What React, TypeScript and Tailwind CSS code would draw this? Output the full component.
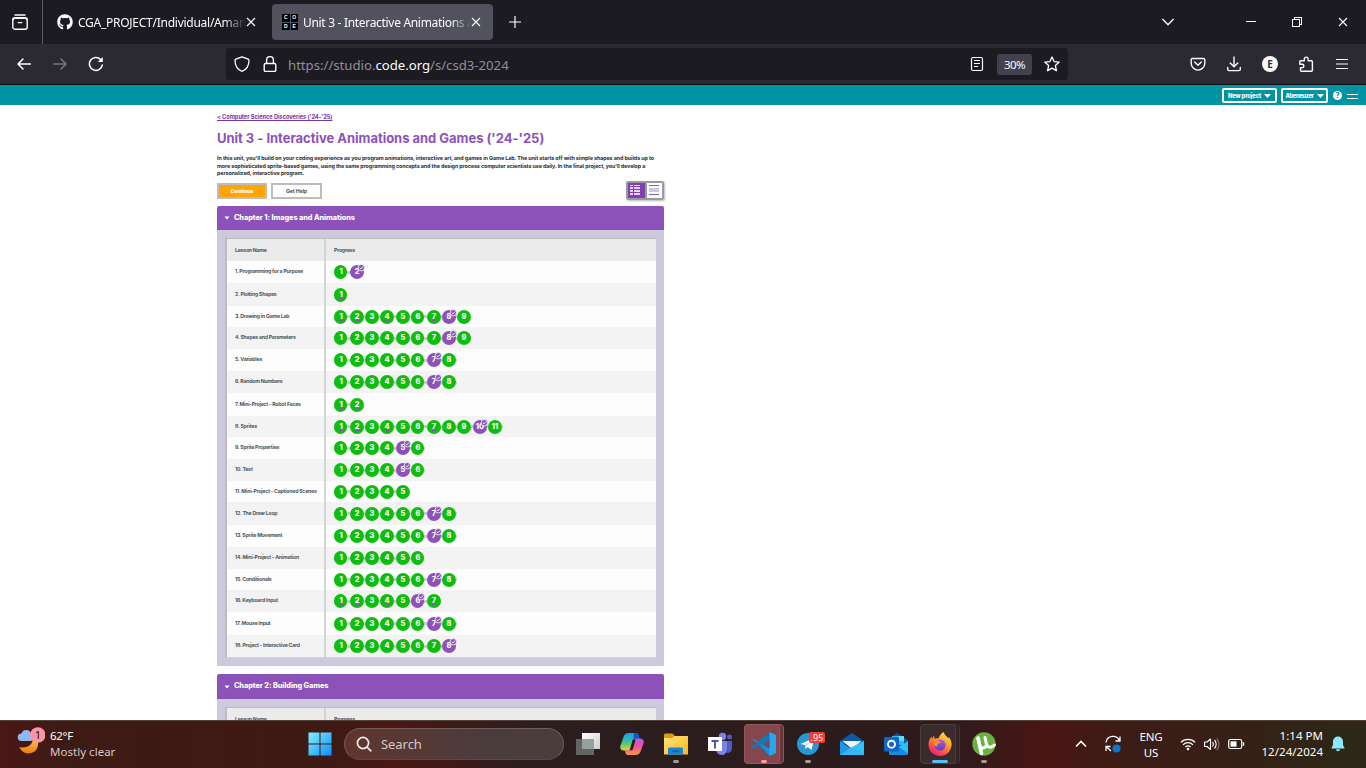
import React from "react";
import { FaGithub } from "react-icons/fa";

type Lesson = { name: string; count: number; choice?: number; h: string; tail?: boolean };

const lessons: Lesson[] = [
  { name: "1. Programming for a Purpose", count: 2, choice: 2, h: "h-[22px]" },
  { name: "2. Plotting Shapes", count: 1, h: "h-[23px]" },
  { name: "3. Drawing in Game Lab", count: 9, choice: 8, h: "h-[21px]" },
  { name: "4. Shapes and Parameters", count: 9, choice: 8, h: "h-[22px]" },
  { name: "5. Variables", count: 8, choice: 7, h: "h-[22px]", tail: true },
  { name: "6. Random Numbers", count: 8, choice: 7, h: "h-[22px]", tail: true },
  { name: "7. Mini-Project - Robot Faces", count: 2, h: "h-[23px]" },
  { name: "8. Sprites", count: 11, choice: 10, h: "h-[21px]", tail: true },
  { name: "9. Sprite Properties", count: 6, choice: 5, h: "h-[22px]", tail: true },
  { name: "10. Text", count: 6, choice: 5, h: "h-[22px]", tail: true },
  { name: "11. Mini-Project - Captioned Scenes", count: 5, h: "h-[21px]" },
  { name: "12. The Draw Loop", count: 8, choice: 7, h: "h-[23px]", tail: true },
  { name: "13. Sprite Movement", count: 8, choice: 7, h: "h-[22px]", tail: true },
  { name: "14. Mini-Project - Animation", count: 6, h: "h-[22px]" },
  { name: "15. Conditionals", count: 8, choice: 7, h: "h-[21px]", tail: true },
  { name: "16. Keyboard Input", count: 7, choice: 6, h: "h-[22px]" },
  { name: "17. Mouse Input", count: 8, choice: 7, h: "h-[23px]", tail: true },
  { name: "18. Project - Interactive Card", count: 8, choice: 8, h: "h-[22px]" },
];

const connectors = ["w-[3px]", "w-px", "w-px", "w-[2px]", "w-px", "w-[3px]", "w-px", "w-px", "w-[2px]", "w-px", "w-px"];

function Close({ className = "" }: { className?: string }) {
  return (
    <svg viewBox="0 0 10 10" className={`h-[10px] w-[10px] shrink-0 ${className}`} fill="none" stroke="#fbfbfe" strokeWidth="1.1">
      <path d="M1 1l8 8M9 1L1 9" />
    </svg>
  );
}

function TabStrip() {
  return (
    <div className="flex h-[44px] items-center bg-[#1c1b22] text-[12px] text-[#fbfbfe]">
      <div className="flex h-full w-[43px] shrink-0 items-center border-r border-[#5b5b66] pl-[12px]">
        <svg viewBox="0 0 16 16" className="h-4 w-4" fill="none" stroke="#fbfbfe" strokeWidth="1.4" strokeLinecap="round">
          <rect x=".8" y="4.4" width="14.4" height="10.8" rx="2" />
          <path d="M3 1h10M.8 6c0-1.300.7-2.300 2-2.300h10.400c1.300 0 2 1 2 2.300M6.200 8.600h3.600" />
        </svg>
      </div>
      <div className="ml-[14px] flex w-[200px] items-center">
        <FaGithub className="h-4 w-4 shrink-0" />
        <span className="mt-px ml-[5px] w-[167px] overflow-hidden whitespace-nowrap tracking-[-0.26px] [mask-image:linear-gradient(90deg,#000_145px,transparent_168px)]">
          CGA_PROJECT/Individual/Aman
        </span>
        <Close className="ml-[1px]" />
      </div>
      <div className="ml-[15px] flex h-[36px] w-[221px] items-center rounded-[4px] bg-[#52525e] pl-[10px]">
        <div className="grid h-4 w-4 shrink-0 grid-cols-2 gap-[1px] text-center font-['Liberation_Sans'] text-[5px] leading-[7.500px] font-bold text-white">
          <span className="bg-black">C</span>
          <span className="bg-black">O</span>
          <span className="bg-black">D</span>
          <span className="bg-black">E</span>
        </div>
        <span className="mt-[1px] ml-[5px] w-[168px] overflow-hidden whitespace-nowrap tracking-[-0.31px] [mask-image:linear-gradient(90deg,#000_148px,transparent_168px)]">
          Unit 3 - Interactive Animations a
        </span>
        <Close />
      </div>
      <svg viewBox="0 0 12 12" className="ml-[16px] h-3 w-3" stroke="#fbfbfe" strokeWidth="1.200">
        <path d="M6 0v12M0 6h12" />
      </svg>
      <svg viewBox="0 0 12 8" className="mt-[-1px] ml-auto h-2 w-3" fill="none" stroke="#fbfbfe" strokeWidth="1.4">
        <path d="M.500 1L6 6.800 11.500 1" />
      </svg>
      <svg viewBox="0 0 10 10" className="ml-[72px] h-[10px] w-[10px]" stroke="#fff" shapeRendering="crispEdges">
        <path d="M0 4.500h10" />
      </svg>
      <svg viewBox="0 0 10 10" className="ml-[36px] h-[10px] w-[10px]" fill="none" stroke="#fff" shapeRendering="crispEdges">
        <path d="M.500 2.500h7v7h-7zM2.500 2.500v-2h7v7h-2" />
      </svg>
      <Close className="mr-[18px] ml-[36px]" />
    </div>
  );
}

function NavBar() {
  return (
    <div className="flex h-[41px] items-center border-b border-[#0c0c0d] bg-[#2b2a33] text-[#fbfbfe]">
      <svg viewBox="0 0 14 12" className="ml-[17px] h-3 w-[14px]" fill="none" stroke="#fbfbfe" strokeWidth="1.500" strokeLinecap="round" strokeLinejoin="round">
        <path d="M13.500 6H1M6 1L1 6l5 5" />
      </svg>
      <svg viewBox="0 0 14 12" className="ml-[22px] h-3 w-[14px]" fill="none" stroke="#77767e" strokeWidth="1.500" strokeLinecap="round" strokeLinejoin="round">
        <path d="M.500 6H13M8 1l5 5-5 5" />
      </svg>
      <svg viewBox="0 0 16 16" className="ml-[21px] h-4 w-4" fill="none" stroke="#fbfbfe" strokeWidth="1.500" strokeLinecap="round">
        <path d="M14.300 9A6.500 6.500 0 1 1 12.600 3.400" />
        <path d="M14.800 1v5h-5z" fill="#fbfbfe" stroke="none" />
      </svg>
      <div className="ml-[122px] flex h-8 w-[842px] items-center rounded-[4px] bg-[#1c1b22]">
        <svg viewBox="0 0 16 16" className="ml-[8px] h-4 w-4" fill="none" stroke="#fbfbfe" strokeWidth="1.300" strokeLinejoin="round">
          <path d="M8 .8l6.200 2.400c.5.200.8.600.8 1.100 0 4.800-1.800 9-7 11-5.200-2-7-6.200-7-11 0-.5.300-.9.800-1.100z" />
        </svg>
        <svg viewBox="0 0 16 16" className="ml-[12px] h-4 w-4" fill="none" stroke="#fbfbfe" strokeWidth="1.400">
          <rect x="2.200" y="7.500" width="11.600" height="8" rx="1.500" />
          <path d="M4.600 7.500V4a3.400 3.400 0 0 1 6.800 0v3.500" />
        </svg>
        <span className="mt-[3px] ml-[10px] text-[13.200px] tracking-[-0.02px] text-[#8f8f98]">
          https://studio.<span className="text-[#fbfbfe]">code.org</span>/s/csd3-2024
        </span>
        <svg viewBox="0 0 14 16" className="ml-auto h-4 w-[14px]" fill="none" stroke="#fbfbfe" strokeWidth="1.200">
          <rect x="1.500" y="1.500" width="11" height="13" rx="1.500" />
          <path d="M4 4.500h6M4 7.500h6M4 10.500h4" />
        </svg>
        <span className="ml-[13px] flex h-[21px] w-[35px] items-center justify-center rounded-[3px] bg-[#42414d] pt-px text-[11.500px] tracking-[-0.5px]">30%</span>
        <svg viewBox="0 0 16 16" className="mr-[8px] ml-[12px] h-4 w-4" fill="none" stroke="#fbfbfe" strokeWidth="1.300" strokeLinejoin="round">
          <path d="M8 1l2.100 4.600 5 .6-3.700 3.400 1 5L8 12.100l-4.400 2.500 1-5L.9 6.200l5-.6z" />
        </svg>
      </div>
      <svg viewBox="0 0 16 16" className="ml-[122px] h-4 w-4" fill="none" stroke="#fbfbfe" strokeWidth="1.400" strokeLinecap="round" strokeLinejoin="round">
        <path d="M2.500 2.500h11c.8 0 1.300.5 1.300 1.300v3.500a6.800 6.800 0 0 1-13.600 0V3.800c0-.8.500-1.300 1.300-1.300zM4.700 6L8 9.200 11.300 6" />
      </svg>
      <svg viewBox="0 0 16 16" className="ml-[20px] h-4 w-4" fill="none" stroke="#fbfbfe" strokeWidth="1.400" strokeLinecap="round" strokeLinejoin="round">
        <path d="M8 1v9.500M4.200 7L8 10.700 11.800 7M1.700 11.500v1.800c0 .8.500 1.300 1.300 1.300h10c.8 0 1.300-.5 1.300-1.300v-1.800" />
      </svg>
      <span className="ml-[20px] flex h-4 w-4 items-center justify-center rounded-full bg-[#fbfbfe] text-[10px] leading-none font-bold text-[#2b2a33]">E</span>
      <svg viewBox="0 0 16 16" className="ml-[20px] h-4 w-4" fill="none" stroke="#fbfbfe" strokeWidth="1.400" strokeLinejoin="round">
        <path d="M2.500 4.700h3.800V3a1.900 1.900 0 0 1 3.800 0v1.700h3.300c.6 0 1 .4 1 1v8.600c0 .6-.4 1-1 1H3.500c-.6 0-1-.4-1-1v-2.600h1.700a1.700 1.700 0 0 0 0-3.400H1.800V5.500c0-.5.300-.8.700-.8z" />
      </svg>
      <svg viewBox="0 0 12 12" className="ml-[22px] h-3 w-3" stroke="#fbfbfe" strokeWidth="1.200">
        <path d="M0 1.500h12M0 6h12M0 10.500h12" />
      </svg>
    </div>
  );
}

function SiteHeader() {
  return (
    <div className="flex h-[20px] items-center justify-end bg-[#0093a4] pt-[1px] pr-[8px] font-['Inter'] text-[5.800px] leading-none font-extrabold text-white">
      <div className="flex h-[15px] w-[55px] items-center justify-center gap-[3px] rounded-[2px] border-2 border-white">
        <span className="tracking-[-0.12px]">New project</span>
        <svg viewBox="0 0 7 4" className="h-1 w-[7px]" fill="#fff"><path d="M0 0h7L3.500 4z" /></svg>
      </div>
      <div className="ml-[4px] flex h-[15px] w-[47px] items-center justify-center gap-[3px] rounded-[2px] border-2 border-white">
        <span className="tracking-[-0.4px]">Abeneuzer</span>
        <svg viewBox="0 0 7 4" className="h-1 w-[7px]" fill="#fff"><path d="M0 0h7L3.500 4z" /></svg>
      </div>
      <span className="ml-[5px] flex h-[9px] w-[9px] items-center justify-center rounded-full bg-white text-[7px] text-[#0093a4]">?</span>
      <span className="mt-[2px] ml-[5px] flex h-[5px] w-[11px] flex-col justify-between">
        <i className="h-px bg-white" />
        <i className="h-px bg-white" />
      </span>
    </div>
  );
}

function Bubble({ n, choice, last, tail }: { n: number; choice: boolean; last: boolean; tail?: boolean }) {
  const mark = !choice && [1, 2, 4, 7].includes(n);
  return (
    <>
      <span
        className={`relative flex h-[14px] shrink-0 items-center justify-center rounded-full text-[7.300px] leading-none font-extrabold text-white ${
          n === 1 || n === 6 ? "w-[13px] pl-px" : "w-[14px]"
        } ${choice ? "bg-[#8c52ba]" : "bg-[#0ebe0e]"}`}
      >
        {n}
        {mark && <i className="absolute bottom-[3px] left-[5px] h-px w-[4px] bg-[#8c52ba]" />}
        {choice && (
          <svg viewBox="0 0 8 8" className="absolute top-[-1px] right-[-1px] h-2 w-2">
            <circle cx="4.300" cy="3.700" r="3.200" fill="#8c52ba" stroke="#f3ecf8" strokeWidth=".9" />
            <path d="M2.800 3.700l1.100 1.200 2-2.300" fill="none" stroke="#fff" strokeWidth=".9" />
          </svg>
        )}
      </span>
      {(!last || tail) && <i className={`h-[3px] shrink-0 bg-[#c6cacd] ${last ? "w-px" : connectors[n - 1]}`} />}
    </>
  );
}

function TableHead() {
  return (
    <div className="flex h-[22px] bg-[#ebebeb]">
      <div className="flex w-[99px] items-center border-r-2 border-[#d5d5d5] pt-px pl-[8px]">Lesson Name</div>
      <div className="flex items-center pt-px pl-[8px]">Progress</div>
    </div>
  );
}

function ChapterHeader({ title, h }: { title: string; h: string }) {
  return (
    <div className={`flex ${h} items-center rounded-t-[2px] bg-[#8c52ba] pl-[7px] text-[7.300px] font-extrabold text-white`}>
      <svg viewBox="0 0 6 4" className="h-1 w-[6px]" fill="#fff"><path d="M.500.500h5L3 3.500z" /></svg>
      <span className="ml-[4px] tracking-[-0.06px]">{title}</span>
    </div>
  );
}

function Page() {
  return (
    <div className="h-[615px] overflow-hidden bg-white pl-[217px] font-['Inter']">
      <div className="w-[447px]">
        <div className="flex h-[24px] items-center text-[5.700px] font-bold tracking-[-0.05px] text-[#7536a8] underline">&lt; Computer Science Discoveries ('24-'25)</div>
        <h1 className="flex h-[19px] items-center text-[13px] font-bold tracking-[-0.02px] whitespace-nowrap text-[#8c52ba]">Unit 3 - Interactive Animations and Games ('24-'25)</h1>
        <div className="mt-[6px] pt-px text-[5.400px] leading-[7.300px] font-bold whitespace-nowrap text-[#292f36]">
          <p className="h-[8px] tracking-[-0.09px]">In this unit, you'll build on your coding experience as you program animations, interactive art, and games in Game Lab. The unit starts off with simple shapes and builds up to</p>
          <p className="h-[7px] tracking-[-0.105px]">more sophisticated sprite-based games, using the same programming concepts and the design process computer scientists use daily. In the final project, you'll develop a</p>
          <p className="h-[6px] tracking-[-0.105px]">personalized, interactive program.</p>
        </div>
        <div className="mt-[5px] flex h-[19px] items-center text-[5.300px] font-extrabold tracking-[-0.15px]">
          <div className="mt-[1px] flex h-[16px] w-[50px] items-center justify-center border-2 border-[#bdbdbd] bg-[#ffa400] pt-px text-white">Continue</div>
          <div className="mt-[1px] ml-[4px] flex h-[16px] w-[51px] items-center justify-center border-2 border-[#bdbdbd] bg-white pt-px font-bold text-[#4d575f]">Get Help</div>
          <div className="ml-auto flex h-[19px] w-[38px] rounded-[2px] border-2 border-[#949ca2] shadow-[1px_1px_2px_#bbb]">
            <svg viewBox="0 0 17 15" className="h-[15px] w-[17px] bg-[#8040ae]" fill="#e3d7ee">
              <path d="M2 2h3v1H2zM6 2h6v1H6zM2 4h3v2H2zM6 4h6v2H6zM2 7h3v2H2zM6 7h6v2H6zM2 10h3v2H2zM6 10h6v2H6z" />
            </svg>
            <svg viewBox="0 0 15 15" className="h-[15px] w-[17px] border-l-2 border-[#949ca2] bg-white" shapeRendering="crispEdges">
              <path d="M2 2h10v1H2zM2 11h10v1H2z" fill="#8060a8" />
              <path d="M2 5h10v4H2z" fill="#cfc4e2" />
            </svg>
          </div>
        </div>
        <div className="mt-[6px]">
          <ChapterHeader title="Chapter 1: Images and Animations" h="h-[24px]" />
        </div>
        <div className="h-[436px] bg-[#cfc9de] px-[8px] pt-[8px] text-[5.200px] font-bold tracking-[-0.23px] whitespace-nowrap text-[#4d575f]">
          <div className="border-t border-b border-l-2 border-t-[#bdbdbd] border-b-[#d5d5d5] border-l-[#bdbdbd]">
            <TableHead />
            {lessons.map((l, i) => (
              <div key={l.name} className={`flex ${l.h} ${i % 2 ? "bg-[#f3f3f3]" : "bg-[#fdfdfd]"}`}>
                <div className="flex w-[99px] shrink-0 items-center border-r-2 border-[#d5d5d5] pl-[8px]">{l.name}</div>
                <div className="flex items-center pl-[8px] tracking-normal">
                  {Array.from({ length: l.count }, (_, k) => (
                    <Bubble key={k} n={k + 1} choice={l.choice === k + 1} last={k + 1 === l.count} tail={l.tail} />
                  ))}
                </div>
              </div>
            ))}
          </div>
        </div>
        <div className="mt-[8px]">
          <ChapterHeader title="Chapter 2: Building Games" h="h-[25px]" />
        </div>
        <div className="bg-[#cfc9de] px-[8px] pt-[8px] text-[5.200px] font-bold tracking-[-0.23px] text-[#4d575f]">
          <div className="border-t border-l-2 border-[#bdbdbd]">
            <TableHead />
          </div>
        </div>
      </div>
    </div>
  );
}

function Slot({ children, dot }: { children: React.ReactNode; dot?: string }) {
  return (
    <div className="relative flex h-full w-[44px] shrink-0 items-center justify-center">
      {children}
      {dot && <i className={`absolute bottom-[4px] h-[3px] rounded-full ${dot}`} />}
    </div>
  );
}

function Taskbar() {
  return (
    <div className="relative z-10 flex h-[48px] items-center border-t border-[#55413a] bg-[linear-gradient(90deg,#4a1715_0px,#3d1b15_70px,#401914_240px,#3d1a15_330px,#4b1714_390px,#2b1e1e_530px,#2b1c1d_800px,#301a1b_960px,#4a1614_1045px,#3b1d16_1130px,#371f16_1220px,#2c2818_1366px)] pb-[1px] text-[12px] text-white">
      <svg viewBox="0 0 28 28" className="mb-[6px] ml-[17px] h-7 w-7 shrink-0">
        <defs>
          <linearGradient id="moon" x1="0" y1="0" x2="0" y2="1"><stop stopColor="#ffc94d" /><stop offset="1" stopColor="#ea7a16" /></linearGradient>
        </defs>
        <path d="M20 11c3 7 0 15.500-8.500 15.500-4 0-7.500-2.500-9-6.500C10 22 16 18 16 11z" fill="url(#moon)" />
        <path d="M4.500 14a3.800 3.800 0 0 1 0-7.600 5 5 0 0 1 9.500 0A4 4 0 0 1 14 14z" fill="#8fb8f5" />
        <circle cx="20.800" cy="8" r="7.800" fill="#ff969f" />
        <text x="21" y="12" textAnchor="middle" fontSize="11" fill="#111">1</text>
      </svg>
      <div className="ml-[5px] w-[248px] text-[11.500px] leading-[16px] tracking-[-0.3px]">
        <div className="text-white">62°F</div>
        <div className="tracking-[0.03px] text-[#d5c8c5]">Mostly clear</div>
      </div>
      <Slot>
        <svg viewBox="0 0 24 24" className="mr-px h-6 w-6">
          <defs><linearGradient id="win" x1="0" y1="0" x2="1" y2="1"><stop stopColor="#83f0ff" /><stop offset="1" stopColor="#0c8dfb" /></linearGradient></defs>
          <path d="M.500.500h11v11H.500zM12.500.500h11v11h-11zM.500 12.500h11v11H.500zM12.500 12.500h11v11h-11z" fill="url(#win)" />
        </svg>
      </Slot>
      <div className="mx-[2px] flex h-8 w-[220px] shrink-0 items-center rounded-full border border-[#725d5a] border-b-[#5c4744] bg-[linear-gradient(90deg,#61352f,#4b3c3b_60%,#493d3b)] pl-[11px]">
        <svg viewBox="0 0 16 16" className="h-4 w-4" fill="none" stroke="#eee" strokeWidth="1.700"><circle cx="7" cy="7" r="5.600" /><path d="M11 11l4.300 4.300" /></svg>
        <span className="mt-px ml-[9px] text-[13px] tracking-[-0.05px] text-[#d4c8c6]">Search</span>
      </div>
      <Slot>
        <svg viewBox="0 0 24 24" className="h-6 w-6">
          <defs><linearGradient id="tv" x1="0" y1="0" x2="1" y2="1"><stop stopColor="#fff" /><stop offset="1" stopColor="#ccc" /></linearGradient></defs>
          <path d="M6 1h18v16H6z" fill="url(#tv)" />
          <path d="M0 7h18v16H0z" fill="#666c6b" opacity=".92" />
          <path d="M6 7h12v10H6z" fill="#999e9e" />
        </svg>
      </Slot>
      <Slot>
        <svg viewBox="0 0 24 24" className="h-6 w-6" fill="none" strokeWidth="6" strokeLinejoin="round">
          <defs>
            <linearGradient id="cpA" x1="0" y1="0" x2="0" y2="1"><stop stopColor="#169bf5" /><stop offset=".55" stopColor="#43c48f" /><stop offset="1" stopColor="#e9d31e" /></linearGradient>
            <linearGradient id="cpB" x1="0" y1="0" x2="0" y2="1"><stop stopColor="#b05bf0" /><stop offset=".5" stopColor="#ee5591" /><stop offset="1" stopColor="#ff9447" /></linearGradient>
          </defs>
          <path d="M9 1h7c2 0 2.500 1.500 3 4l.5 2h-4c-2 0-2.600 1-3.200 3l-2 7c-.5 1-1 1.500-2 1.500H4c-3 0-4.500-2-3.500-5L3.500 5C4.300 2.500 6 1 9 1z" fill="url(#cpA)" />
          <path d="M14 1h2c2 0 2.500 1.500 3 4l.5 2h-4c-1 0-1.500 0-2-.5z" fill="#1256c8" />
          <path d="M15 23H8c-2 0-2.500-1.500-3-4l-.2-1h4.500c1.400 0 1.800-1 2.400-3l2-6.500c.5-1.200 1-2 2.300-2h4c3 0 4.500 2 3.500 5l-3 8c-.8 2.500-2.500 3.500-5.500 3.500z" fill="url(#cpB)" />
          <path d="M10.300 16.500l2.500-9h2.800l-2.600 9.500c-.5 1-1 1.300-2 1.300H9c.7-.2 1-.8 1.300-1.800z" fill="#2b1c1d" />
        </svg>
      </Slot>
      <Slot dot="w-[6px] bg-[#a39a9a]">
        <svg viewBox="0 0 24 24" className="h-6 w-6">
          <defs><linearGradient id="fo" x1="0" y1="0" x2="1" y2="1"><stop stopColor="#ffe27a" /><stop offset="1" stopColor="#fbb91d" /></linearGradient></defs>
          <path d="M0 3c0-.8.600-1.500 1.500-1.500h7L11 4h12c.6 0 1 .4 1 1v5H0z" fill="#dd9b13" />
          <path d="M0 6h8l2.500-2H23c.6 0 1 .4 1 1v17.500H0z" fill="url(#fo)" />
          <path d="M4 22.500V17c0-1 .7-1.500 1.500-1.500h12c.9 0 1.500.6 1.500 1.500v5.500z" fill="#1685d3" />
          <path d="M8 18.500h7v1.300H8z" fill="#0c5ea8" />
        </svg>
      </Slot>
      <Slot>
        <svg viewBox="0 0 24 24" className="h-6 w-6">
          <circle cx="21.500" cy="5" r="2.500" fill="#5059c9" />
          <circle cx="14.500" cy="4.500" r="3.700" fill="#7b83eb" />
          <path d="M17 9h7v7c0 3-2 5-5 5z" fill="#5059c9" />
          <path d="M9 9h10v8c0 4-2.500 6-5.500 6S8 20 8 17z" fill="#7b83eb" />
          <path d="M0 5h14v14H0z" fill="#fff" />
          <path d="M3.500 8h7v2H8v6.500H6V10H3.500z" fill="#4b53bc" />
        </svg>
      </Slot>
      <div className="relative flex h-full w-[44px] shrink-0 items-center">
        <div className="absolute left-[2px] h-[40px] w-[40px] rounded-[4px] border border-[#8f5458] bg-[#6b363b]" />
        <div className="relative ml-[2px] flex h-[40px] w-[36px] items-center justify-center rounded-[4px] border border-[#94575d] bg-[#84474d]">
          <svg viewBox="0 0 24 24" className="ml-[4px] h-6 w-6 shrink-0">
            <path d="M17.500 0L24 3v18l-6.500 3L6.300 13.500 2 17 0 16v-1.600l17.500-14z" fill="#1677b9" />
            <path d="M0 8l2-1 4 3L17.500 24l.5-.3V17z" fill="#1b91dc" />
            <path d="M17.500 0L24 3v18l-6.500 3z" fill="#29a6f2" />
            <path d="M0 9.500L2.500 12 0 14.500zM17.500 7.500v9L11.500 12z" fill="#84474d" />
          </svg>
          <i className="absolute bottom-0 left-[16px] h-[3px] w-[6px] rounded-full bg-[#ff9ca5]" />
        </div>
      </div>
      <Slot dot="w-[6px] bg-[#a39a9a]">
        <svg viewBox="0 0 24 24" className="h-6 w-6"><circle cx="12" cy="12" r="11" fill="#2898d4" /><path d="M4.500 12L18 6l-2.300 12-4-3-2.200 2-.5-4z" fill="#fff" /><path d="M9 13l6-4.500-4.500 5.500-1 3z" fill="#b9d9e9" /></svg>
        <span className="absolute top-[11px] left-[23px] flex h-[11px] w-[16px] items-center justify-center rounded-[2px] bg-[#f23c34] text-[9px] leading-none tracking-[0.1px]">.95</span>
      </Slot>
      <Slot>
        <svg viewBox="0 0 24 24" className="h-6 w-6">
          <path d="M0 9L12 1l12 8v3H0z" fill="#0d59a6" />
          <path d="M2.500 9h19L12 17z" fill="#eef2f6" />
          <path d="M0 9l12 8L24 9v14H0z" fill="#1e97e6" />
          <path d="M0 23l12-8 12 8z" fill="#36b7f5" />
          <path d="M24 9v14L12 15z" fill="#2fc4f8" />
        </svg>
      </Slot>
      <Slot>
        <svg viewBox="0 0 24 24" className="h-6 w-6">
          <path d="M4 7l9-6 11 7v3L14 16 4 11z" fill="#0a53a8" />
          <path d="M8 4h12v9H8z" fill="#34b5f2" /><path d="M14 4h6v5h-6z" fill="#62dcf9" />
          <path d="M24 9v12c0 1.200-.8 2-2 2H7c-1.200 0-2-.8-2-2v-2l13-6z" fill="#2bc3f5" />
          <path d="M5 20l9-6 10 7.500c-.4 1-1 1.500-2 1.500H7c-1.200 0-2-1-2-3z" fill="#178ce0" />
          <rect y="5" width="15" height="14.500" rx="1.300" fill="#0f67c2" />
          <circle cx="7.500" cy="12.200" r="3.500" fill="none" stroke="#fff" strokeWidth="1.900" />
        </svg>
      </Slot>
      <div className="relative flex h-full w-[44px] shrink-0 items-center">
        <div className="absolute left-[2px] h-[40px] w-[40px] rounded-[4px] border border-[#443536] bg-[#312425]" />
        <div className="relative ml-[2px] flex h-[40px] w-[36px] items-center justify-center rounded-[4px] border border-[#4c3e3f] bg-[#3a2b2c]">
          <svg viewBox="0 0 24 24" className="ml-[4px] h-6 w-6 shrink-0">
            <defs>
              <linearGradient id="ff" x1=".8" y1="0" x2=".2" y2="1"><stop stopColor="#ffe64a" /><stop offset=".4" stopColor="#ff9a2b" /><stop offset=".75" stopColor="#ff4450" /><stop offset="1" stopColor="#e31587" /></linearGradient>
              <linearGradient id="ffp" x1="0" y1="0" x2="0" y2="1"><stop stopColor="#ae5bea" /><stop offset="1" stopColor="#5142bd" /></linearGradient>
            </defs>
            <path d="M15.500 0c1 3 3.500 4.500 5 6.500l.5-1.500c2 3 3 6 2.500 9C22.500 20 18 24 12 24 5.500 24 .500 19 .500 12.500c0-3 1-6 3-8L4 7l2-3.500.5 3.200c1-.6 2.500-.7 4-.2C11 4 13 1.500 15.500 0z" fill="url(#ff)" />
            <circle cx="12" cy="13" r="5.600" fill="url(#ffp)" />
            <path d="M5.500 8.500c3-.8 6 0 7.500 2l-2.500 1c-1.500.5-1.500 1.800-.3 2.500-2 .8-4-.2-4.700-2z" fill="#ff8b2d" />
          </svg>
          <i className="absolute bottom-0 left-[11px] h-[3px] w-[16px] rounded-full bg-[#55bdf5]" />
        </div>
      </div>
      <Slot dot="w-[6px] bg-[#a39a9a]">
        <svg viewBox="0 0 24 24" className="h-6 w-6" fill="none" stroke="#fff" strokeLinecap="round" strokeLinejoin="round">
          <circle cx="12" cy="12" r="11.700" fill="#69b241" stroke="none" />
          <path d="M6 6l3.500 15.500" strokeWidth="3.600" />
          <path d="M7.500 12.500c.7 3 2.500 3.800 4.500 3.300s2.800-2 2.300-4.500L13 5.500M14.500 12c.7 2.800 2 3.600 4.500 3 1.500-.4 2.500-1 3.300-2" strokeWidth="3" />
        </svg>
      </Slot>
      <svg viewBox="0 0 12 8" className="ml-auto h-2 w-3 shrink-0" fill="none" stroke="#fff" strokeWidth="1.600"><path d="M1 6.500l5-5 5 5" /></svg>
      <svg viewBox="0 0 18 18" className="ml-[17px] h-[18px] w-[18px] shrink-0" fill="none" stroke="#fff" strokeWidth="1.300">
        <path d="M2 7.500A7 7 0 0 1 15.500 6M16 1.500V6h-4.500M7 16l-5-4.500M2 16v-4.500h4.500" />
        <circle cx="12.500" cy="13.500" r="4" fill="#0878d7" stroke="none" />
      </svg>
      <div className="ml-[14px] w-[30px] pt-px text-center text-[11.500px] leading-[16px] tracking-[-0.2px]"><div>ENG</div><div>US</div></div>
      <svg viewBox="0 0 16 14" className="ml-[14px] h-[14px] w-4 shrink-0" fill="none" stroke="#fff" strokeWidth="1.200">
        <path d="M.800 5.300a10.200 10.200 0 0 1 14.400 0M3 7.800a7 7 0 0 1 10 0M5.300 10.100a3.900 3.900 0 0 1 5.400 0" /><circle cx="8" cy="12" r="1.300" fill="#fff" stroke="none" />
      </svg>
      <svg viewBox="0 0 16 14" className="ml-[8px] h-[14px] w-4 shrink-0" fill="none" stroke="#fff" strokeWidth="1.100" strokeLinejoin="round">
        <path d="M.600 5h2.500L6.500 2v10.500L3.100 9.500H.600zM8.500 5c1 1 1 3.500 0 4.500M10.500 3c2.200 2 2.200 6.500 0 8.500" /><path d="M12.700 1.500c3 3 3 8.500 0 11.500" stroke="#84706a" />
      </svg>
      <svg viewBox="0 0 17 12" className="ml-[8px] h-3 w-[17px] shrink-0" fill="none" stroke="#fff" strokeWidth="1.200">
        <rect x=".700" y="1.500" width="13" height="9" rx="1.800" /><path d="M2.500 3.300h6v5.400h-6z" fill="#fff" stroke="none" /><path d="M15.500 4.300v3.400" strokeWidth="1.500" />
      </svg>
      <div className="ml-[11px] w-[67px] text-right text-[11.500px] leading-[16px] tracking-[0.03px] whitespace-nowrap"><div>1:14 PM</div><div>12/24/2024</div></div>
      <svg viewBox="0 0 14 16" className="mr-[21px] ml-[8px] h-4 w-[14px] shrink-0" fill="#8ee6ff"><path d="M7 .500a5 5 0 0 1 5 5V9l1.500 3v.5H.500V12L2 9V5.500a5 5 0 0 1 5-5zM5 13.300h4a2 2 0 0 1-4 0z" /></svg>
    </div>
  );
}

export default function App() {
  return (
    <div className="h-[768px] w-[1366px] overflow-hidden font-['Noto_Sans',sans-serif]">
      <TabStrip />
      <NavBar />
      <SiteHeader />
      <Page />
      <Taskbar />
    </div>
  );
}
